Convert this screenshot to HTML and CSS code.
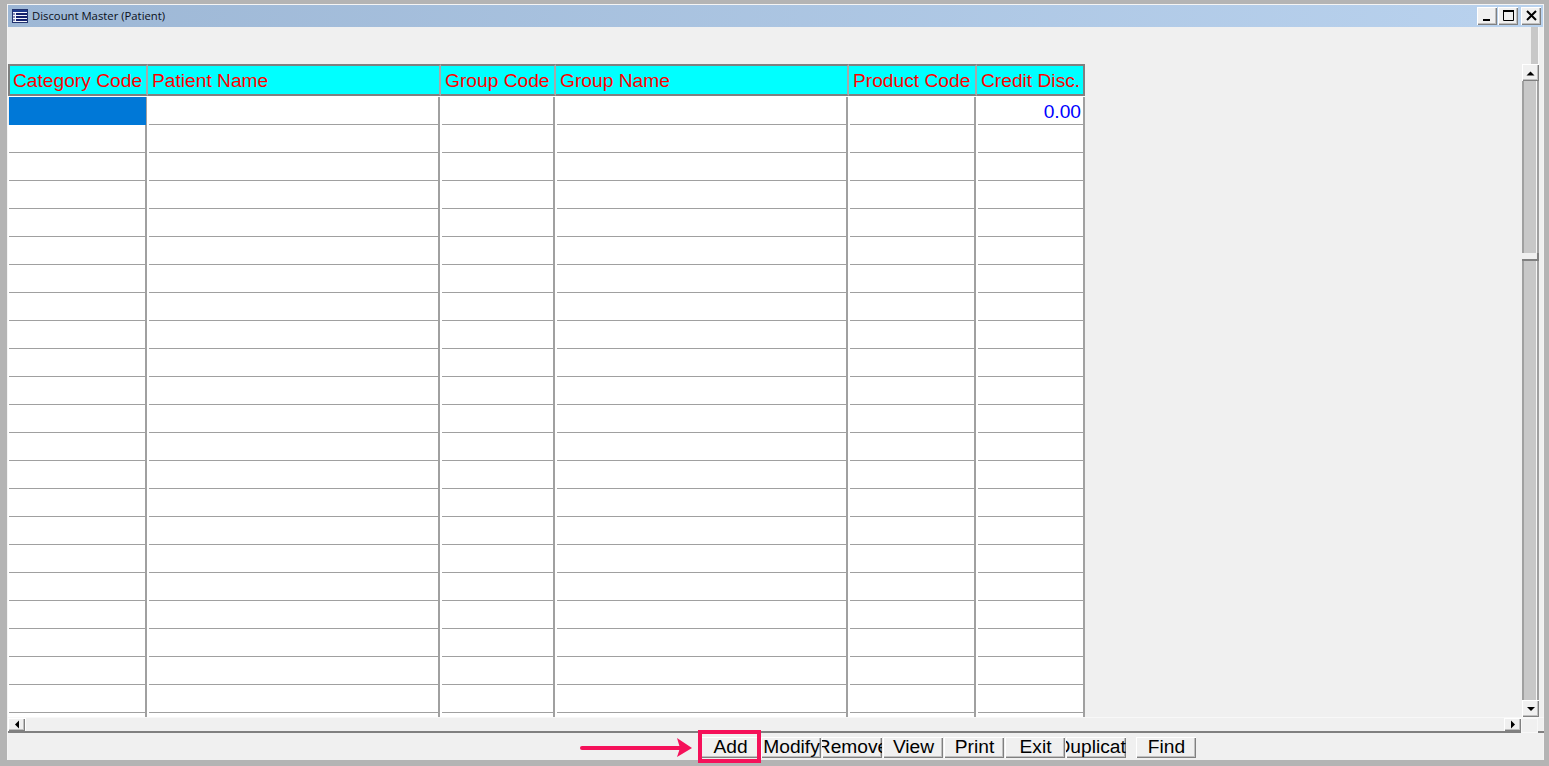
FILE: index.html
```html
<!DOCTYPE html>
<html lang="en">
<head>
<meta charset="utf-8">
<title>Discount Master (Patient)</title>
<link rel="stylesheet" href="styles.css">
</head>
<body>
<div class="window">
  <header class="titlebar">
    <svg class="app-icon" width="16" height="16" viewBox="0 0 16 16">
      <rect x="0.500" y="1.500" width="15" height="13" fill="#f4f6fb" stroke="#22336f"/>
      <rect x="1" y="2" width="14" height="2" fill="#1f3a8c"/>
      <rect x="4" y="5" width="11" height="2" fill="#14226e"/>
      <rect x="4" y="8" width="11" height="2" fill="#14226e"/>
      <rect x="4" y="11" width="11" height="2" fill="#14226e"/>
      <path d="M2 5v8" stroke="#14226e" stroke-dasharray="2 1"/>
    </svg>
    <span class="title">Discount Master (Patient)</span>
    <div class="win-btns">
      <button class="win-btn"><svg width="19" height="18" viewBox="0 0 19 18"><rect x="5" y="12" width="7" height="2" fill="#000"/></svg></button>
      <button class="win-btn"><svg width="19" height="18" viewBox="0 0 19 18"><path d="M4.500 3.500h10v10h-10z" fill="none" stroke="#000"/><path d="M4 4h11" stroke="#000" stroke-width="2"/></svg></button>
      <button class="win-btn close"><svg width="19" height="18" viewBox="0 0 19 18"><path d="M5 4l9 9M14 4l-9 9" stroke="#000" stroke-width="2"/></svg></button>
    </div>
  </header>

  <main class="content">
    <div class="grid-pane">
      <section class="grid">
        <div class="head first">Category Code</div>
        <div class="head">Patient Name</div>
        <div class="head">Group Code</div>
        <div class="head">Group Name</div>
        <div class="head">Product Code</div>
        <div class="head last">Credit Disc.</div>
        <div class="head-gap"></div>

        <div class="cell selected"></div><div class="cell"></div><div class="cell"></div><div class="cell"></div><div class="cell"></div><div class="cell last value">0.00</div>
        <div class="cell"></div><div class="cell"></div><div class="cell"></div><div class="cell"></div><div class="cell"></div><div class="cell last"></div>
        <div class="cell"></div><div class="cell"></div><div class="cell"></div><div class="cell"></div><div class="cell"></div><div class="cell last"></div>
        <div class="cell"></div><div class="cell"></div><div class="cell"></div><div class="cell"></div><div class="cell"></div><div class="cell last"></div>
        <div class="cell"></div><div class="cell"></div><div class="cell"></div><div class="cell"></div><div class="cell"></div><div class="cell last"></div>
        <div class="cell"></div><div class="cell"></div><div class="cell"></div><div class="cell"></div><div class="cell"></div><div class="cell last"></div>
        <div class="cell"></div><div class="cell"></div><div class="cell"></div><div class="cell"></div><div class="cell"></div><div class="cell last"></div>
        <div class="cell"></div><div class="cell"></div><div class="cell"></div><div class="cell"></div><div class="cell"></div><div class="cell last"></div>
        <div class="cell"></div><div class="cell"></div><div class="cell"></div><div class="cell"></div><div class="cell"></div><div class="cell last"></div>
        <div class="cell"></div><div class="cell"></div><div class="cell"></div><div class="cell"></div><div class="cell"></div><div class="cell last"></div>
        <div class="cell"></div><div class="cell"></div><div class="cell"></div><div class="cell"></div><div class="cell"></div><div class="cell last"></div>
        <div class="cell"></div><div class="cell"></div><div class="cell"></div><div class="cell"></div><div class="cell"></div><div class="cell last"></div>
        <div class="cell"></div><div class="cell"></div><div class="cell"></div><div class="cell"></div><div class="cell"></div><div class="cell last"></div>
        <div class="cell"></div><div class="cell"></div><div class="cell"></div><div class="cell"></div><div class="cell"></div><div class="cell last"></div>
        <div class="cell"></div><div class="cell"></div><div class="cell"></div><div class="cell"></div><div class="cell"></div><div class="cell last"></div>
        <div class="cell"></div><div class="cell"></div><div class="cell"></div><div class="cell"></div><div class="cell"></div><div class="cell last"></div>
        <div class="cell"></div><div class="cell"></div><div class="cell"></div><div class="cell"></div><div class="cell"></div><div class="cell last"></div>
        <div class="cell"></div><div class="cell"></div><div class="cell"></div><div class="cell"></div><div class="cell"></div><div class="cell last"></div>
        <div class="cell"></div><div class="cell"></div><div class="cell"></div><div class="cell"></div><div class="cell"></div><div class="cell last"></div>
        <div class="cell"></div><div class="cell"></div><div class="cell"></div><div class="cell"></div><div class="cell"></div><div class="cell last"></div>
        <div class="cell"></div><div class="cell"></div><div class="cell"></div><div class="cell"></div><div class="cell"></div><div class="cell last"></div>
        <div class="cell"></div><div class="cell"></div><div class="cell"></div><div class="cell"></div><div class="cell"></div><div class="cell last"></div>
        <div class="cell"></div><div class="cell"></div><div class="cell"></div><div class="cell"></div><div class="cell"></div><div class="cell last"></div>
      </section>
    </div>

    <aside class="vscroll">
      <div class="vs-top"></div>
      <button class="sb-btn v"><svg width="16" height="16" viewBox="0 0 16 16"><path d="M3.500 10.500h8L7.500 6.500z" fill="#000"/></svg></button>
      <div class="vs-track one"></div>
      <div class="vs-thumb"></div>
      <div class="vs-track two"></div>
      <button class="sb-btn v"><svg width="16" height="16" viewBox="0 0 16 16"><path d="M4 6h8l-4 4z" fill="#000"/></svg></button>
    </aside>

    <div class="hscroll">
      <button class="sb-btn h"><svg width="16" height="15" viewBox="0 0 16 15"><path d="M10 3.500v8L6 7.500z" fill="#000"/></svg></button>
      <div class="hs-track"></div>
      <button class="sb-btn h"><svg width="16" height="15" viewBox="0 0 16 15"><path d="M6 3.500v8l4-4z" fill="#000"/></svg></button>
      <div class="corner"></div>
    </div>
  </main>

  <footer class="toolbar">
    <button class="btn"><span>Add</span></button>
    <button class="btn"><span>Modify</span></button>
    <button class="btn"><span>Remove</span></button>
    <button class="btn"><span>View</span></button>
    <button class="btn"><span>Print</span></button>
    <button class="btn"><span>Exit</span></button>
    <button class="btn"><span>Duplicate</span></button>
    <button class="btn find"><span>Find</span></button>
  </footer>
</div>

<svg class="annotation" width="200" height="40" viewBox="0 0 200 40">
  <rect x="120" y="4" width="59" height="29" fill="none" stroke="#f5115a" stroke-width="4"/>
  <path d="M2 20H100" stroke="#f5115a" stroke-width="4" stroke-linecap="round"/>
  <path d="M97 10l15 10L97 29l3-9z" fill="#f5115a"/>
</svg>
</body>
</html>
```
FILE: styles.css
```css
* { box-sizing: border-box; }

html, body { height: 100%; }

body {
  margin: 0;
  height: 766px;
  overflow: hidden;
  padding: 4px 5px 6px 7px;
  background: #b4b4b4;
  font-family: "Liberation Sans", Arial, sans-serif;
  position: relative;
}

.window {
  height: 756px;
  display: flex;
  flex-direction: column;
  background: #f0f0f0;
  border-top: 1px solid #f4f4f4;
  border-left: 1px solid #f4f4f4;
  border-right: 1px solid #f4f4f4;
}

.titlebar {
  flex: none;
  height: 22px;
  display: flex;
  align-items: center;
  padding-left: 4px;
  background: linear-gradient(to right, #9db7d5, #b9d2ee);
}

.app-icon { flex: none; }

.title {
  margin-left: 4px;
  margin-bottom: 2px;
  font-family: "Open Sans", sans-serif;
  font-size: 11.3px;
  color: #0b1020;
  white-space: nowrap;
}

.win-btns {
  margin-left: auto;
  margin-right: 2px;
  display: flex;
  gap: 1px;
}

.win-btn {
  width: 20px;
  height: 18px;
  padding: 0;
  border: 0;
  background: #f0f0f0;
  box-shadow: inset 1px 1px 0 #fff, inset -1px -1px 0 #808080, inset -2px -2px 0 #c0c0c0;
  display: flex;
  align-items: center;
  justify-content: center;
}

.win-btn.close { margin-left: 2px; }

.content {
  flex: none;
  height: 706px;
  display: grid;
  grid-template-columns: 1514px 22px;
  grid-template-rows: 690px 16px;
}

.grid-pane {
  overflow: hidden;
  padding-top: 37px;
}

.grid {
  display: grid;
  grid-template-columns: 140px 293px 115px 293px 128px 108px;
  grid-auto-rows: 28px;
  grid-template-rows: 32px 1px;
  width: 1077px;
}

.head {
  background: #00ffff;
  border-top: 2px solid #808080;
  border-bottom: 2px solid #808080;
  border-right: 2px solid #a8a8a8;
  color: #ff0000;
  font-size: 19.2px;
  line-height: 30px;
  padding-left: 4px;
  white-space: nowrap;
  overflow: hidden;
}

.head.first { border-left: 2px solid #808080; padding-left: 3px; }
.head.last { border-right-color: #808080; }

.head-gap { grid-column: 1 / -1; background: #fff; }

.cell {
  margin-left: -1px;
  margin-right: 1px;
  background: linear-gradient(#a0a0a0, #a0a0a0) 2px 27px / calc(100% - 2px) 1px no-repeat #fff;
  border-right: 2px solid #a0a0a0;
}

.cell.last { margin-right: 0; }

.cell.selected {
  margin-left: 1px;
  background: #0078d7;
  border-right-width: 1px;
}

.value {
  color: #0000ff;
  font-size: 19.2px;
  line-height: 29px;
  text-align: right;
  padding-right: 2px;
}

.vscroll {
  display: flex;
  flex-direction: column;
  width: 17px;
}

.vs-top {
  flex: none;
  height: 37px;
  width: 8px;
  margin-left: 9px;
  background: #c8c8c8;
  border-right: 1px solid #f6f6f6;
}

.vs-track {
  background: #c8c8c8;
  border-left: 2px solid #a0a0a0;
  border-right: 2px solid #a0a0a0;
  box-shadow: inset -1px 0 0 #f6f6f6;
}

.vs-track.one { height: 172px; }
.vs-track.two { height: 440px; }

.vs-thumb {
  height: 8px;
  background: #f0f0f0;
  box-shadow: inset -2px -2px 0 #808080;
}

.sb-btn {
  flex: none;
  padding: 0;
  border: 0;
  background: #f0f0f0;
  box-shadow: inset 1px 1px 0 #fff, inset -1px -1px 0 #808080, inset -2px -2px 0 #c0c0c0;
  display: flex;
  align-items: center;
  justify-content: center;
}

.sb-btn.v { height: 17px; }
.sb-btn.h { width: 17px; }

.hscroll {
  grid-column: 1 / -1;
  display: flex;
  border-top: 1px solid #f8f8f8;
  border-bottom: 2px solid #808080;
  height: 16px;
}

.hs-track {
  width: 1479px;
  background: #f0f0f0;
  border-left: 1px solid #fff;
}

.corner {
  width: 17px;
  margin-bottom: -2px;
  background: #f0f0f0;
  box-shadow: inset 0 0 0 1px #f8f8f8;
}

.toolbar {
  flex: 1;
  display: flex;
  align-items: flex-start;
  gap: 1px;
  padding: 4px 0 0 692px;
  background: #f0f0f0;
}

.btn {
  flex: none;
  width: 60px;
  height: 21px;
  padding: 0 0 0 1px;
  border: 0;
  background: #f0f0f0;
  box-shadow: inset 1px 1px 0 #fff, inset -1px -1px 0 #808080, inset -2px -2px 0 #c0c0c0;
  color: #000;
  font-family: "Liberation Sans", Arial, sans-serif;
  font-size: 19.2px;
  line-height: 20px;
  overflow: hidden;
  display: flex;
  justify-content: center;
  white-space: nowrap;
}

.btn span { flex: none; }

.find { margin-left: 9px; }

.annotation {
  position: absolute;
  left: 580px;
  top: 728px;
}
```
